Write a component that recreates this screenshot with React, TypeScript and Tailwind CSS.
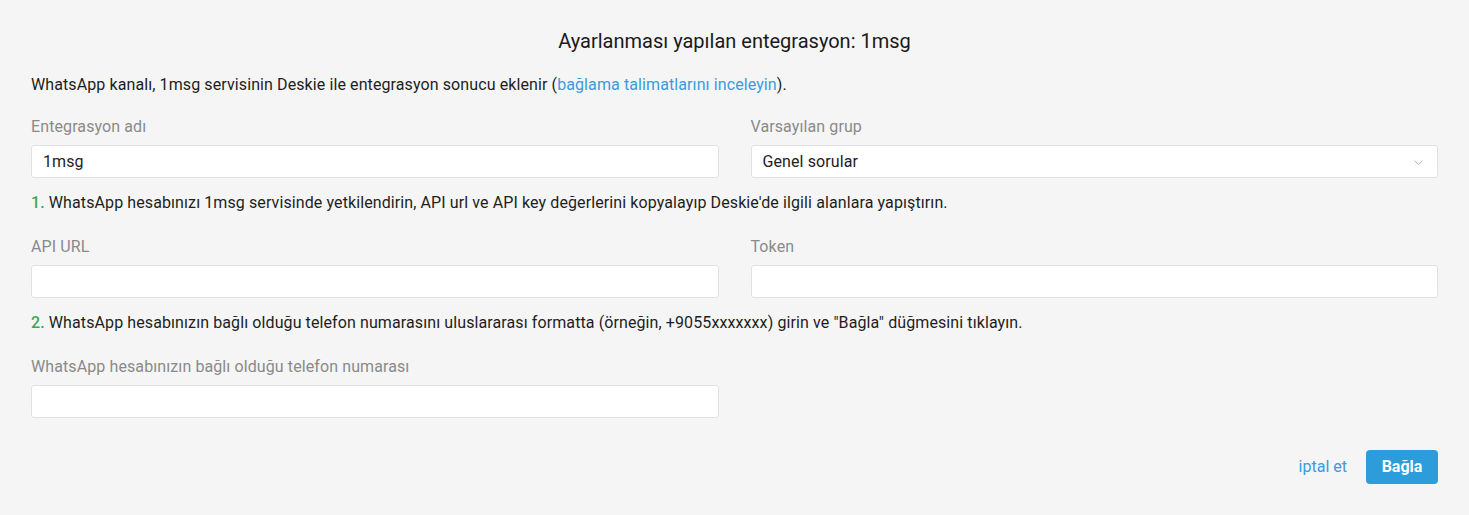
function Field({ label, value, select }: { label: string; value?: string; select?: boolean }) {
    return (
        <div className="flex flex-col">
            <label className="text-[16px] leading-5 tracking-[0.1px] text-[#8a8a8a] mb-[8px]">{label}</label>
            <div className="h-[33px] bg-white border border-[#e2e2e2] rounded-[3px] flex items-center pl-[11px] pr-[14px] text-[16px] tracking-[0.1px] text-[#222]">
                <span className="flex-1">{value}</span>
                {select && (
                    <svg width="9" height="6" viewBox="0 0 9 6" fill="none" className="mt-[2px]">
                        <path d="M0.5 0.5 L4.5 4.5 L8.5 0.5" stroke="#b9b9c4" strokeWidth="1" />
                    </svg>
                )}
            </div>
        </div>
    );
}

export default function App() {
    return (
        <div
            className="min-h-[515px] bg-[#f5f5f5] px-[31px] pt-[29px] text-[#1e1e1e]"
            style={{ fontFamily: 'Roboto, "Liberation Sans", sans-serif' }}
        >
            {/* Title */}
            <h1 className="text-center text-[20px] leading-6 text-[#1a1a1a]">Ayarlanması yapılan entegrasyon: 1msg</h1>

            <p className="mt-[22px] text-[16px] leading-5 tracking-[0.1px]">
                WhatsApp kanalı, 1msg servisinin Deskie ile entegrasyon sonucu eklenir (
                <a className="text-[#3a9be0]">bağlama talimatlarını inceleyin</a>).
            </p>

            <div className="mt-[22px] grid grid-cols-2 gap-x-[32px]">
                <Field label="Entegrasyon adı" value="1msg" />
                <Field label="Varsayılan grup" value="Genel sorular" select />
            </div>

            <p className="mt-[15px] text-[16px] leading-5 tracking-[0.1px]">
                <span className="text-[#3aa75c] font-medium">1.</span> WhatsApp hesabınızı 1msg servisinde yetkilendirin, API url ve API key değerlerini kopyalayıp Deskie'de ilgili alanlara yapıştırın.
            </p>

            <div className="mt-[24px] grid grid-cols-2 gap-x-[32px]">
                <Field label="API URL" />
                <Field label="Token" />
            </div>

            <p className="mt-[15px] text-[16px] leading-5 tracking-[0.1px]">
                <span className="text-[#3aa75c] font-medium">2.</span> WhatsApp hesabınızın bağlı olduğu telefon numarasını uluslararası formatta (örneğin, +9055xxxxxxx) girin ve "Bağla" düğmesini tıklayın.
            </p>

            <div className="mt-[24px] grid grid-cols-2 gap-x-[32px]">
                <Field label="WhatsApp hesabınızın bağlı olduğu telefon numarası" />
            </div>

            <div className="mt-[32px] flex items-center justify-end gap-[19px]">
                <button className="text-[16px] text-[#3a9be0]">iptal et</button>
                <button className="h-[34px] w-[72px] rounded-[4px] bg-[#2d9cdb] text-white text-[16px] font-bold">Bağla</button>
            </div>
        </div>
    );
}
